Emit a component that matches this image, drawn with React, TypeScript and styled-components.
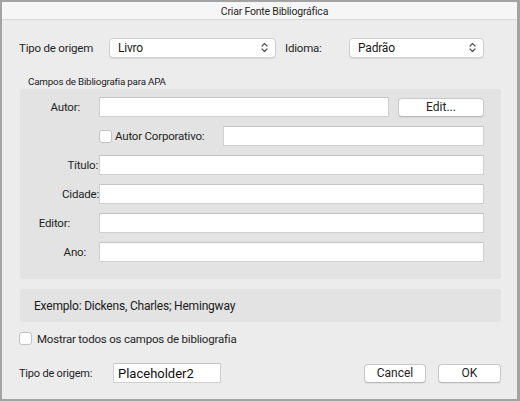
import styled, { createGlobalStyle } from "styled-components";

const GlobalStyle = createGlobalStyle`
  html, body {
    margin: 0;
    padding: 0;
    background: #ececec;
  }
  body {
    font-family: Roboto, "Liberation Sans", Arial, sans-serif;
    color: #1f1f1f;
    letter-spacing: -0.2px;
  }
  * {
    box-sizing: border-box;
  }
`;

const Window = styled.div`
  width: 520px;
  height: 401px;
  border-style: solid;
  border-color: #a3a3a3;
  border-width: 2px 3px 2px 2px;
  background: #ececec;
  display: flex;
  flex-direction: column;
`;

const TitleBar = styled.div`
  height: 18px;
  background: #f6f6f6;
  border-bottom: 1px solid #d9d9d9;
  display: flex;
  align-items: center;
  justify-content: center;
  font-size: 10.5px;
  color: #262626;
  padding: 1px 0 0 30px;
`;

const Body = styled.div`
  flex: 1;
  display: flex;
  flex-direction: column;
  padding: 17px 16px 0 17px;
`;

const TopRow = styled.div`
  display: flex;
  align-items: center;
  height: 21px;
`;

const RowLabel = styled.span<{ $w: number; $size?: number; $indent?: number }>`
  width: ${(p) => p.$w}px;
  flex: none;
  padding-left: ${(p) => p.$indent ?? 0}px;
  font-size: ${(p) => p.$size ?? 11.5}px;
  white-space: nowrap;
`;

const Select = styled.div<{ $w: number }>`
  width: ${(p) => p.$w}px;
  height: 20px;
  background: #fff;
  border: 1px solid #cfcfcf;
  border-radius: 4px;
  box-shadow: 0 1px 1px rgba(0, 0, 0, 0.08);
  display: flex;
  align-items: center;
  justify-content: space-between;
  padding: 0 7px 0 8px;
  font-size: 12px;
  color: #1a1a1a;
`;

const GroupLabel = styled.div`
  font-size: 9.8px;
  margin: 18px 0 0 9px;
  height: 13px;
  color: #222;
`;

const GroupBox = styled.div`
  margin-left: 1px;
  background: #e3e3e3;
  border-radius: 3px;
  padding: 8px 17px 17px 0;
  display: flex;
  flex-direction: column;
  gap: 9px;
`;

const FieldRow = styled.div`
  display: flex;
  align-items: center;
  height: 20px;
`;

const FieldLabel = styled.span<{ $gap: number }>`
  width: 79px;
  flex: none;
  text-align: right;
  padding-right: ${(p) => p.$gap}px;
  font-size: 11.5px;
  white-space: nowrap;
  position: relative;
  z-index: 1;
`;

const TextInput = styled.div<{ $w?: number }>`
  ${(p) => (p.$w ? `width: ${p.$w}px; flex: none;` : "flex: 1;")}
  height: 20px;
  background: #fff;
  border: 1px solid #d0d0d0;
  border-top-color: #c4c4c4;
  display: flex;
  align-items: center;
  padding: 0 4px;
  font-size: 13px;
  letter-spacing: 0;
  color: #111;
`;

const Button = styled.div<{ $w: number }>`
  width: ${(p) => p.$w}px;
  flex: none;
  height: 19px;
  background: #fff;
  border: 1px solid #c8c8c8;
  border-bottom-color: #b8b8b8;
  border-radius: 4px;
  box-shadow: 0 1px 1px rgba(0, 0, 0, 0.06);
  display: flex;
  align-items: center;
  justify-content: center;
  font-size: 12px;
  letter-spacing: 0;
  color: #222;
`;

const CheckBox = styled.span`
  width: 13px;
  height: 13px;
  flex: none;
  background: #fff;
  border: 1px solid #c2c2c2;
  border-radius: 3px;
`;

const CorpRow = styled(FieldRow)`
  padding-left: 79px;
`;

const CorpLabel = styled.span`
  width: 111px;
  flex: none;
  padding-left: 3px;
  font-size: 11.5px;
  white-space: nowrap;
`;

const ExampleBox = styled.div`
  margin: 10px 0 0 1px;
  height: 33px;
  background: #e3e3e3;
  border-radius: 3px;
  display: flex;
  align-items: center;
  padding-left: 14px;
  font-size: 12px;
  color: #1a1a1a;
`;

const CheckRow = styled.label`
  display: flex;
  align-items: center;
  gap: 5px;
  margin-top: 10px;
  height: 13px;
  font-size: 11.5px;
`;

const BottomRow = styled.div`
  display: flex;
  align-items: center;
  margin-top: 18px;
  height: 20px;
`;

const Spacer = styled.div`
  flex: 1;
`;

const Chevrons = () => (
  <svg width="7" height="11" viewBox="0 0 7 11" fill="none" stroke="#555" strokeWidth="1.2" strokeLinecap="round" strokeLinejoin="round">
    <path d="M1 4 L3.5 1.5 L6 4" />
    <path d="M1 7 L3.5 9.5 L6 7" />
  </svg>
);

const fields: { label: string; gap: number }[] = [
  { label: "Título:", gap: 1 },
  { label: "Cidade:", gap: 0 },
  { label: "Editor:", gap: 29 },
  { label: "Ano:", gap: 13 },
];

export default function App() {
  return (
    <>
      <GlobalStyle />
      <Window>
        <TitleBar>Criar Fonte Bibliográfica</TitleBar>
        <Body>
          <TopRow>
            <RowLabel $w={90}>Tipo de origem</RowLabel>
            <Select $w={167}>
              Livro
              <Chevrons />
            </Select>
            <RowLabel $w={73} $indent={9}>Idioma:</RowLabel>
            <Select $w={135}>
              Padrão
              <Chevrons />
            </Select>
          </TopRow>

          <GroupLabel>Campos de Bibliografia para APA</GroupLabel>
          <GroupBox>
            <FieldRow>
              <FieldLabel $gap={19}>Autor:</FieldLabel>
              <TextInput $w={290} />
              <Spacer />
              <Button $w={86}>Edit...</Button>
            </FieldRow>
            <CorpRow>
              <CheckBox />
              <CorpLabel>Autor Corporativo:</CorpLabel>
              <TextInput />
            </CorpRow>
            {fields.map((f) => (
              <FieldRow key={f.label}>
                <FieldLabel $gap={f.gap}>{f.label}</FieldLabel>
                <TextInput />
              </FieldRow>
            ))}
          </GroupBox>

          <ExampleBox>Exemplo: Dickens, Charles; Hemingway</ExampleBox>

          <CheckRow>
            <CheckBox />
            Mostrar todos os campos de bibliografia
          </CheckRow>

          <BottomRow>
            <RowLabel $w={94} $size={11}>Tipo de origem:</RowLabel>
            <TextInput $w={108}>Placeholder2</TextInput>
            <Spacer />
            <Button $w={62}>Cancel</Button>
            <Button $w={63} style={{ marginLeft: 12 }}>OK</Button>
          </BottomRow>
        </Body>
      </Window>
    </>
  );
}
